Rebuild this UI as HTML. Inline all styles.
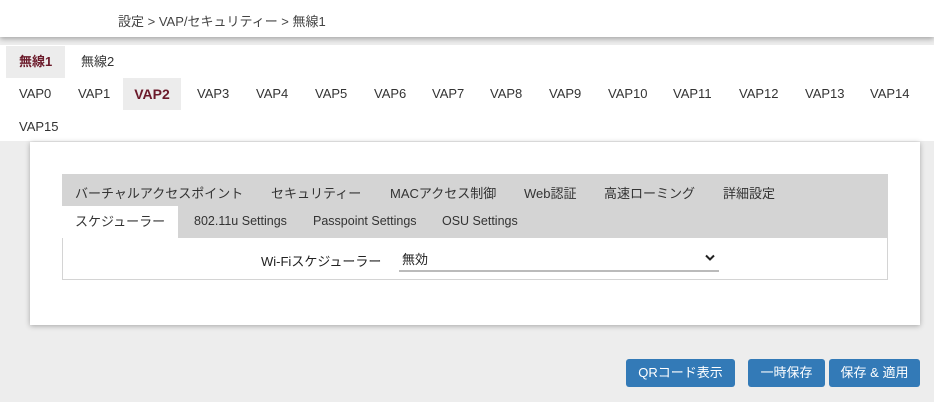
<!DOCTYPE html>
<html><head><meta charset="utf-8"><style>
*{margin:0;padding:0;box-sizing:border-box}
body{width:934px;height:402px;background:#ededed;font-family:"Liberation Sans","Noto Sans CJK JP",sans-serif;font-size:13px;color:#333;position:relative;overflow:hidden}
.hdr{position:absolute;left:0;top:0;width:934px;height:37px;background:#fff;box-shadow:0 2px 5px rgba(0,0,0,.3);z-index:2}
.hdr span{position:absolute;left:118px;top:11px;font-size:13px;color:#444}
.nav{position:absolute;left:0;top:45px;width:934px;height:96px;background:#fff}
.a{position:absolute;white-space:nowrap}
.t1{top:1px;height:32px;line-height:32px;padding:0 13px}
.sel{background:#ececec;color:#6b1a2a;font-weight:bold}
.v{top:33px;height:32px;line-height:32px}
.card{position:absolute;left:30px;top:142px;width:890px;height:183px;background:#fff;box-shadow:0 1px 5px rgba(0,0,0,.3)}
.tabs{position:absolute;left:32px;top:32px;width:826px;height:64px;background:#d4d4d4}
.tabs .a{font-size:13px;color:#333}
.box{position:absolute;left:32px;top:96px;width:826px;height:42px;border:1px solid #d4d4d4;border-top:none}
.btn{position:absolute;top:359px;height:28px;line-height:28px;background:#337ab7;color:#fff;text-align:center;border-radius:3px;font-size:13px}
</style></head><body>
<div class="hdr"><span>設定 &gt; VAP/セキュリティー &gt; 無線1</span></div>
<div class="nav">
<div class="a t1 sel" style="left:6px">無線1</div>
<div class="a t1" style="left:68px">無線2</div>
<div class="a v sel" style="left:123px;width:58px;text-align:center;font-size:14px">VAP2</div>
<div class="a v" style="left:19px">VAP0</div>
<div class="a v" style="left:78px">VAP1</div>
<div class="a v" style="left:197px">VAP3</div>
<div class="a v" style="left:256px">VAP4</div>
<div class="a v" style="left:315px">VAP5</div>
<div class="a v" style="left:374px">VAP6</div>
<div class="a v" style="left:432px">VAP7</div>
<div class="a v" style="left:490px">VAP8</div>
<div class="a v" style="left:549px">VAP9</div>
<div class="a v" style="left:608px">VAP10</div>
<div class="a v" style="left:673px">VAP11</div>
<div class="a v" style="left:739px">VAP12</div>
<div class="a v" style="left:805px">VAP13</div>
<div class="a v" style="left:870px">VAP14</div>
<div class="a v" style="left:19px;top:66px">VAP15</div>
</div>
<div class="card">
<div class="tabs">
<div class="a" style="left:13px;top:9px">バーチャルアクセスポイント</div>
<div class="a" style="left:209px;top:9px">セキュリティー</div>
<div class="a" style="left:328px;top:9px">MACアクセス制御</div>
<div class="a" style="left:462px;top:9px">Web認証</div>
<div class="a" style="left:542px;top:9px">高速ローミング</div>
<div class="a" style="left:661px;top:9px">詳細設定</div>
<div class="a" style="left:0;top:32px;width:116px;height:32px;background:#fff;line-height:32px;padding-left:13px">スケジューラー</div>
<div class="a" style="left:132px;top:40px;font-size:12.5px">802.11u Settings</div>
<div class="a" style="left:251px;top:40px;font-size:12.5px">Passpoint Settings</div>
<div class="a" style="left:380px;top:40px;font-size:12.5px">OSU Settings</div>
</div>
<div class="box">
<div class="a" style="left:198px;top:13px;color:#222">Wi-Fiスケジューラー</div>
<div class="a" style="left:336px;top:5px;width:320px;height:29px;border-bottom:2px solid #bbb">
<span style="position:absolute;left:3px;top:6px;color:#222">無効</span>
<svg style="position:absolute;left:306px;top:11px" width="10" height="8" viewBox="0 0 10 8"><path d="M1 1.5L5 5.5L9 1.5" stroke="#222" stroke-width="2" fill="none"/></svg>
</div>
</div>
</div>
<div class="btn" style="left:626px;width:109px">QRコード表示</div>
<div class="btn" style="left:748px;width:77px">一時保存</div>
<div class="btn" style="left:829px;width:91px">保存 &amp; 適用</div>
</body></html>
